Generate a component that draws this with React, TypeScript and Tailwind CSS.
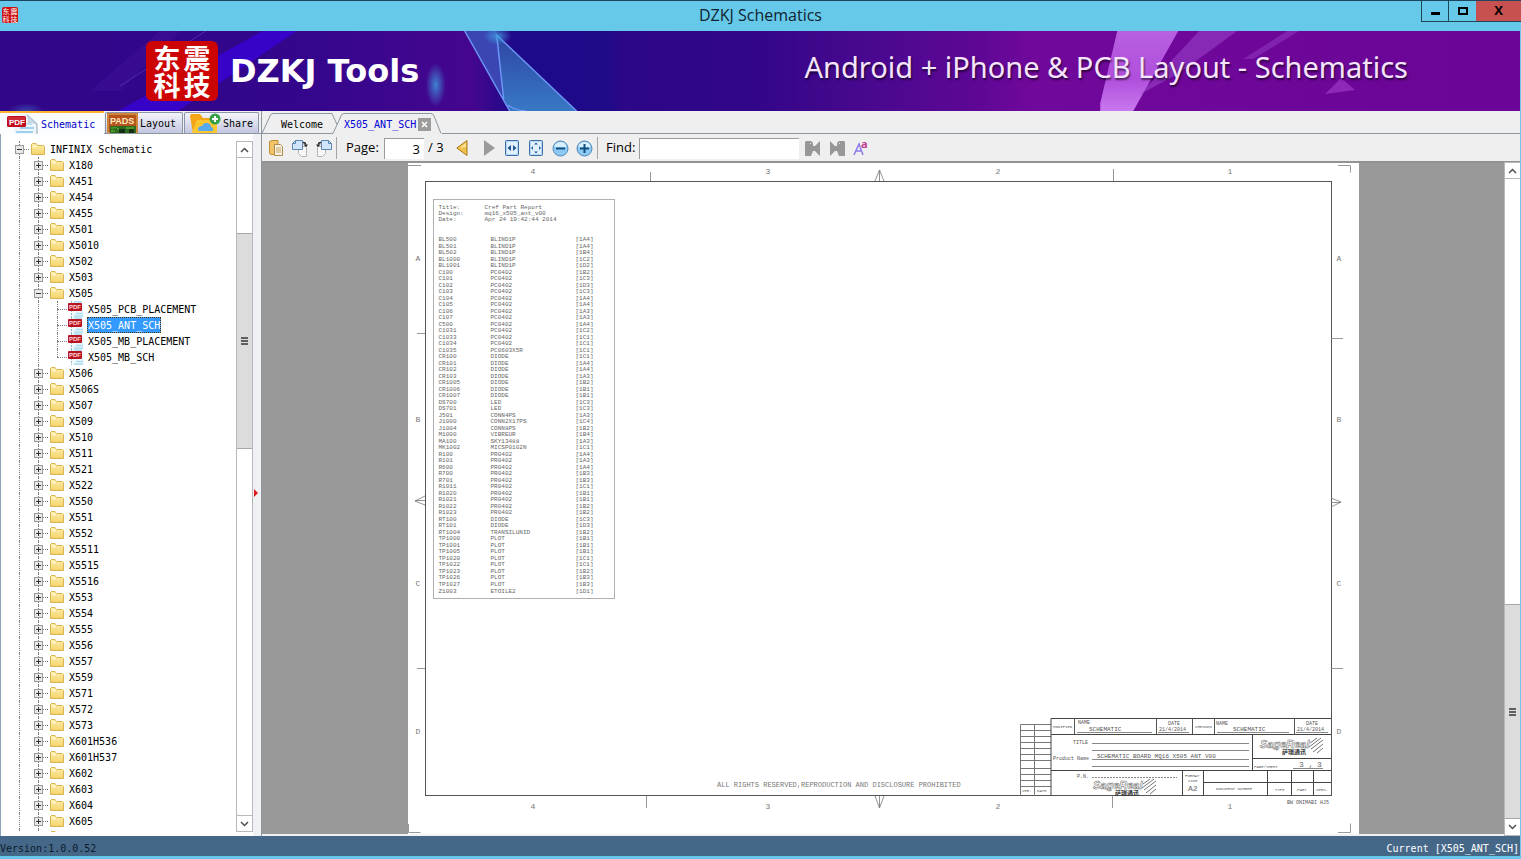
import { useState } from "react"
import type { ReactNode } from "react"

type TreeItem = { name: string; files?: string[] }

const folders: TreeItem[] = [
    { name: "X180" },
    { name: "X451" },
    { name: "X454" },
    { name: "X455" },
    { name: "X501" },
    { name: "X5010" },
    { name: "X502" },
    { name: "X503" },
    { name: "X505", files: ["X505_PCB_PLACEMENT", "X505_ANT_SCH", "X505_MB_PLACEMENT", "X505_MB_SCH"] },
    { name: "X506" },
    { name: "X506S" },
    { name: "X507" },
    { name: "X509" },
    { name: "X510" },
    { name: "X511" },
    { name: "X521" },
    { name: "X522" },
    { name: "X550" },
    { name: "X551" },
    { name: "X552" },
    { name: "X5511" },
    { name: "X5515" },
    { name: "X5516" },
    { name: "X553" },
    { name: "X554" },
    { name: "X555" },
    { name: "X556" },
    { name: "X557" },
    { name: "X559" },
    { name: "X571" },
    { name: "X572" },
    { name: "X573" },
    { name: "X601H536" },
    { name: "X601H537" },
    { name: "X602" },
    { name: "X603" },
    { name: "X604" },
    { name: "X605" },
]

const header = [
    ["Title:", "Cref Part Report"],
    ["Design:", "mq16_x505_ant_v00"],
    ["Date:", "Apr 24 19:42:44 2014"],
]

const parts = [
    ["BL500", "BLIND1P", "[1A4]"],
    ["BL501", "BLIND1P", "[1A4]"],
    ["BL502", "BLIND1P", "[1B4]"],
    ["BL1000", "BLIND1P", "[1C2]"],
    ["BL1001", "BLIND1P", "[1D2]"],
    ["C100", "PC0402", "[1B2]"],
    ["C101", "PC0402", "[1C3]"],
    ["C102", "PC0402", "[1D3]"],
    ["C103", "PC0402", "[1C3]"],
    ["C104", "PC0402", "[1A4]"],
    ["C105", "PC0402", "[1A4]"],
    ["C106", "PC0402", "[1A3]"],
    ["C107", "PC0402", "[1A3]"],
    ["C500", "PC0402", "[1A4]"],
    ["C1031", "PC0402", "[1C2]"],
    ["C1033", "PC0402", "[1C1]"],
    ["C1034", "PC0402", "[1C1]"],
    ["C1035", "PC0603X5R", "[1C1]"],
    ["CR100", "DIODE", "[1C1]"],
    ["CR101", "DIODE", "[1A4]"],
    ["CR102", "DIODE", "[1A4]"],
    ["CR103", "DIODE", "[1A3]"],
    ["CR1005", "DIODE", "[1B2]"],
    ["CR1006", "DIODE", "[1B1]"],
    ["CR1007", "DIODE", "[1B1]"],
    ["DS700", "LED", "[1C3]"],
    ["DS701", "LED", "[1C3]"],
    ["J501", "CONN4PS", "[1A3]"],
    ["J1000", "CONN2X17PS", "[1C4]"],
    ["J1004", "CONN8PS", "[1B2]"],
    ["M1000", "VIBREUR", "[1B4]"],
    ["MA100", "SKY13488", "[1A3]"],
    ["MK1002", "MICSP0102N", "[1C1]"],
    ["R100", "PR0402", "[1A4]"],
    ["R101", "PR0402", "[1A3]"],
    ["R600", "PR0402", "[1A4]"],
    ["R700", "PR0402", "[1B3]"],
    ["R701", "PR0402", "[1B3]"],
    ["R1011", "PR0402", "[1C1]"],
    ["R1020", "PR0402", "[1B1]"],
    ["R1021", "PR0402", "[1B1]"],
    ["R1022", "PR0402", "[1B2]"],
    ["R1023", "PR0402", "[1B2]"],
    ["RT100", "DIODE", "[1C3]"],
    ["RT101", "DIODE", "[1D3]"],
    ["RT1004", "TRANSILUNID", "[1B2]"],
    ["TP1000", "PLOT", "[1B1]"],
    ["TP1001", "PLOT", "[1B1]"],
    ["TP1005", "PLOT", "[1B1]"],
    ["TP1020", "PLOT", "[1C1]"],
    ["TP1022", "PLOT", "[1C1]"],
    ["TP1023", "PLOT", "[1B2]"],
    ["TP1026", "PLOT", "[1B3]"],
    ["TP1027", "PLOT", "[1B3]"],
    ["Z1003", "ETOILE2", "[1D1]"],
]

/* ---------- icons ---------- */

function FolderIcon() {
    return (
        <svg className="w-[14px] h-[13px] shrink-0" viewBox="0 0 14 13">
            <defs>
                <linearGradient id="folder" x1="0" y1="0" x2="0" y2="1">
                    <stop offset="0" stopColor="#fff0ac" />
                    <stop offset="1" stopColor="#f3d36b" />
                </linearGradient>
            </defs>
            <path d="M.5 11.500V1.500L1.500.5H5l1.500 2h6l1 1v8z" fill="url(#folder)" stroke="#dab251" />
            <path d="M1.500 3.500H6" stroke="#fffbe0" />
        </svg>
    )
}

function PdfIcon() {
    return (
        <svg className="w-4 h-4 shrink-0" viewBox="0 0 16 16">
            <path d="M3 0h8l5 4v12H3z" fill="#eef8fd" />
            <path d="M3.500 0v16" stroke="#9fb4c4" strokeDasharray="2 1" />
            <path d="M6 1h8M8 12.500h7M6 15h9" stroke="#a9dbf0" strokeWidth="1.500" />
            <rect x="0" y="2" width="14" height="8" rx="1" fill="#b91220" />
            <text x="1" y="8" className="font-['Liberation_Sans'] text-[6px] font-bold" fill="#ffdede">PDF</text>
        </svg>
    )
}

function PdfLargeIcon() {
    return (
        <svg className="w-8 h-5 shrink-0" viewBox="0 0 32 20">
            <path d="M7 0h15l8 8v12H7z" fill="#eef6fb" />
            <path d="M20 1l10 9v10" fill="none" stroke="#8da3b1" />
            <path d="M20 1c2 3 2 6 1 8 3-1 6 0 9 1z" fill="#c9dce8" stroke="#9fb4c2" strokeWidth=".5" />
            <path d="M13 14h14M9 18h17" stroke="#9fd0ee" strokeWidth="2" />
            <path d="M19 10h6" stroke="#b9dcf0" strokeWidth="1.500" />
            <rect x="0" y="2" width="19" height="11" rx="1.500" fill="#c10d1d" />
            <path d="M1 3h17v4H1z" fill="#d8404a" opacity=".6" />
            <text x="2" y="11" className="font-['Liberation_Sans'] text-[8px] font-bold" fill="#fff">PDF</text>
        </svg>
    )
}

function PadsIcon() {
    return (
        <svg className="w-[31px] h-5 shrink-0" viewBox="0 0 31 20">
            <rect width="31" height="20" fill="#b4541c" />
            <rect x="1" y="1" width="29" height="19" fill="none" stroke="#e8b35a" />
            <rect x="3" y="13" width="26" height="7" fill="#2c6a1f" />
            <path d="M4 15h6l2 2h5M19 15h8M4 18h4" stroke="#66c53a" />
            <rect x="12" y="16" width="6" height="4" fill="#163012" />
            <rect x="22" y="16" width="5" height="4" fill="#163012" />
            <text x="3" y="11" className="font-['Liberation_Sans'] text-[9px] font-bold" fill="#ffe9c0">PADS</text>
        </svg>
    )
}

function ShareIcon() {
    return (
        <svg className="w-8 h-5 shrink-0" viewBox="0 0 32 20">
            <path d="M1 3q0-2 2-2h8l3 4h13v15H4z" fill="#f2a618" />
            <path d="M3 20L8 7h20v13z" fill="#ffc62e" />
            <path d="M9 17q0-4 4-4 2-4 6-3 3 1 3 4 3 1 2 4H10q-1 0-1-1z" fill="#56a9ec" />
            <circle cx="26" cy="6" r="5.500" fill="#35a046" />
            <path d="M26 3v6M23 6h6" stroke="#fff" strokeWidth="2" />
        </svg>
    )
}

function CopyIcon() {
    return (
        <svg className="w-[14px] h-4" viewBox="0 0 14 16">
            <path d="M.5 1.500L3 .5h6v14H2l-1.500-1z" fill="#f0c467" stroke="#c08f35" />
            <path d="M5.500 4.500h6l2 2v9h-8z" fill="#f6f1e2" stroke="#b08a48" />
            <path d="M7 8h5M7 10h5M7 12h5" stroke="#c9a765" />
        </svg>
    )
}

function RotateIcon({ flip }: { flip?: boolean }) {
    return (
        <svg className={flip ? "w-4 h-[17px] -scale-x-100" : "w-4 h-[17px]"} viewBox="0 0 16 17">
            <path d="M6.500 6.500h8v10h-5l-3-3z" fill="#f7f7f7" stroke="#b5b5b5" />
            <path d="M.5 3.500l3-3h7v9H.5z" fill="#cfe4f8" stroke="#5d86b5" />
            <path d="M.5 3.500h3v-3" fill="none" stroke="#5d86b5" />
            <path d="M11 2.500q2.500 0 2.500 2" fill="none" stroke="#222" strokeWidth="1.500" />
            <path d="M11.500 4.500h4.500l-2 2.500z" fill="#222" />
        </svg>
    )
}

function FitIcon({ wide }: { wide?: boolean }) {
    return (
        <svg className="w-[14px] h-4" viewBox="0 0 14 16">
            <rect x=".5" y=".5" width="13" height="15" rx="1" fill="#b5d7f6" stroke="#3c6ea8" />
            <rect x="2" y="2" width="10" height="12" fill="#e2f0fc" />
            {wide ? (
                <path d="M6 5v6L2.500 8zM8 5v6l3.500-3z" fill="#1f5593" />
            ) : (
                <path d="M7 2.500l2 2H5zM7 13.500l2-2H5zM2 8l2-2v4zM12 8l-2-2v4z" fill="#2d63a0" />
            )}
        </svg>
    )
}

function ZoomIcon({ plus }: { plus?: boolean }) {
    return (
        <svg className="w-[17px] h-[17px]" viewBox="0 0 17 17">
            <circle cx="8.500" cy="8.500" r="7.500" fill="#8cc9f5" stroke="#4f87b5" />
            <path d="M2.500 7a6 5 0 0 1 12 0z" fill="#d8effe" />
            <path d={plus ? "M4 8.500h9M8.500 4v9" : "M4 8.500h9"} stroke="#14507f" strokeWidth="2" />
        </svg>
    )
}

function FindIcon({ next }: { next?: boolean }) {
    return (
        <svg className={next ? "w-[15px] h-4 -scale-x-100" : "w-[15px] h-4"} viewBox="0 0 15 16">
            <path d="M0 2l1-1h5l2 2v3l2 0 5-5v15l-5-5H8l-2 5H0z" fill="#979797" />
            <rect x="5" y="3" width="1" height="1" fill="#e5e5e5" />
        </svg>
    )
}

function Chevron({ up }: { up?: boolean }) {
    return (
        <svg className="w-[9px] h-[6px]" viewBox="0 0 9 6">
            <path d={up ? "M1 5l3.500-3.500L8 5" : "M1 1l3.500 3.500L8 1"} fill="none" stroke="#505050" strokeWidth="1.500" />
        </svg>
    )
}

function Grip() {
    return (
        <span className="flex flex-col gap-px">
            <span className="w-[7px] h-[2px] bg-[#606060]" />
            <span className="w-[7px] h-[2px] bg-[#606060]" />
            <span className="w-[7px] h-[2px] bg-[#606060]" />
        </span>
    )
}

/* ---------- title bar + banner ---------- */

function TitleBar() {
    return (
        <header className="relative h-[31px] shrink-0 bg-[#66c9ea] border-t border-[#1d4560] flex items-start justify-center">
            <span className="absolute left-[2px] top-[6px] w-4 h-4 rounded-xs bg-[#cc1010] text-white grid grid-cols-2 text-[7px] leading-[8px] text-center font-['Noto_Sans_CJK_SC',sans-serif]">
                <span>东</span><span>震</span><span>科</span><span>技</span>
            </span>
            <h1 className="font-['Open_Sans',sans-serif] text-[16px] leading-[29px] text-[#0f2430]">DZKJ Schematics</h1>
            <div className="absolute right-0 top-0 flex h-[21px] border-l border-b border-[#1f4656]">
                <button aria-label="Minimize" className="w-[27px] border-r border-[#1f4656] flex items-center justify-center">
                    <span className="w-[9px] h-[3px] mt-1 bg-black" />
                </button>
                <button aria-label="Maximize" className="w-[27px] flex items-center justify-center">
                    <span className="w-[10px] h-2 border-2 border-black" />
                </button>
                <button aria-label="Close" className="w-[45px] bg-[#c75050] flex items-center justify-center font-['Open_Sans',sans-serif] text-[13px] font-bold text-black">
                    X
                </button>
            </div>
        </header>
    )
}

function Banner() {
    return (
        <div className="relative h-20 shrink-0 overflow-hidden bg-[#310688] text-white">
            <svg className="absolute inset-0 w-full h-full" viewBox="0 0 1521 80" preserveAspectRatio="none">
                <defs>
                    <linearGradient id="sky">
                        <stop offset="0" stopColor="#310688" />
                        <stop offset=".2" stopColor="#33068c" />
                        <stop offset=".31" stopColor="#45068f" />
                        <stop offset=".34" stopColor="#1c0a88" />
                        <stop offset=".4" stopColor="#1f0a88" />
                        <stop offset=".41" stopColor="#2c0788" />
                        <stop offset=".5" stopColor="#330689" />
                        <stop offset=".57" stopColor="#48088f" />
                        <stop offset=".64" stopColor="#5d0796" />
                        <stop offset=".68" stopColor="#70089b" />
                        <stop offset="1" stopColor="#6a0598" />
                    </linearGradient>
                    <linearGradient id="shard" x1="0" y1="0" x2="0" y2="1">
                        <stop offset="0" stopColor="#2f4fa8" />
                        <stop offset="1" stopColor="#3d8cd0" />
                    </linearGradient>
                    <linearGradient id="pink" x1="0" y1="0" x2="0" y2="1">
                        <stop offset="0" stopColor="#b860e0" />
                        <stop offset=".6" stopColor="#b04fdd" />
                        <stop offset="1" stopColor="#c878ee" />
                    </linearGradient>
                    <radialGradient id="glow">
                        <stop offset="0" stopColor="#3fa0e0" stopOpacity=".8" />
                        <stop offset="1" stopColor="#3fa0e0" stopOpacity="0" />
                    </radialGradient>
                </defs>
                <rect width="1521" height="80" fill="url(#sky)" />
                <path d="M263 0h34L218 53l-40 27h-60z" fill="#3a02d8" opacity=".8" />
                <path d="M160 0h20L120 60H90z" fill="#4a1aa8" opacity=".25" />
                <path d="M206 0L120 55" stroke="#6a4ac8" opacity=".5" />
                <path d="M465 0h32l8 70z" fill="#3b46b4" />
                <path d="M497 4l80 76h-67l-6-12z" fill="url(#shard)" opacity=".85" />
                <path d="M465 0l45 80M497 4l7 64M497 4l80 76M508 74q7 5 18 6" fill="none" stroke="#6b94f4" strokeWidth="1.500" />
                <ellipse cx="498" cy="5" rx="14" ry="9" fill="url(#glow)" />
                <ellipse cx="436" cy="54" rx="10" ry="22" fill="url(#glow)" />
                <ellipse cx="26" cy="80" rx="18" ry="8" fill="url(#glow)" opacity=".5" />
                <path d="M1118 0h61l-45 80h-33v-8z" fill="url(#pink)" />
                <path d="M1200 0h38l-58 42-40 22z" fill="#a04bd0" opacity=".5" />
                <path d="M1288 0h12l-46 28h-10z" fill="#a04bd0" opacity=".4" />
                <path d="M1342 47l14 12-30 4z" fill="#9c38c4" opacity=".7" />
            </svg>
            <div className="relative flex h-full items-center pl-[146px] pr-28">
                <div className="grid grid-cols-2 w-[72px] h-[60px] px-[6px] py-[3px] rounded-md bg-[#cc0404] font-['Noto_Sans_CJK_SC',sans-serif] text-[27px] leading-[27px] font-bold text-center">
                    <span>东</span><span>震</span><span>科</span><span>技</span>
                </div>
                <span className="ml-3 font-['DejaVu_Sans',sans-serif] text-[32px] font-bold">DZKJ Tools</span>
                <span className="ml-auto mb-2 font-['Noto_Sans',sans-serif] text-[29px] text-[#f6e4fc] [text-shadow:1px_2px_2px_rgba(0,0,0,0.6)]">
                    Android + iPhone &amp; PCB Layout - Schematics
                </span>
            </div>
        </div>
    )
}

/* ---------- sidebar ---------- */

function Line({ last, branch }: { last?: boolean; branch?: boolean }) {
    return (
        <span className="relative w-[19px] h-4 shrink-0">
            <span className={last ? "absolute left-[9px] top-0 h-2 border-l border-dotted border-[#808080]" : "absolute left-[9px] top-0 h-4 border-l border-dotted border-[#808080]"} />
            {branch && <span className="absolute left-[9px] right-0 top-2 border-t border-dotted border-[#808080]" />}
        </span>
    )
}

function Toggle({ open, name, onClick }: { open: boolean; name: string; onClick: () => void }) {
    return (
        <span className="relative w-[19px] h-4 shrink-0">
            <span className="absolute left-[9px] top-0 h-4 border-l border-dotted border-[#808080]" />
            <span className="absolute left-[9px] right-0 top-2 border-t border-dotted border-[#808080]" />
            <button
                aria-label={(open ? "Collapse " : "Expand ") + name}
                onClick={onClick}
                className="absolute left-[5px] top-1 w-[9px] h-[9px] border border-[#9a9a9a] bg-[#e9e9e9]"
            >
                <svg className="block w-[7px] h-[7px]" viewBox="0 0 7 7">
                    <path d={open ? "M1 3.500h5" : "M1 3.500h5M3.500 1v5"} stroke="#333" />
                </svg>
            </button>
        </span>
    )
}

function Tree({ selected, onSelect }: { selected: string; onSelect: (name: string) => void }) {
    const [open, setOpen] = useState<string[]>(["INFINIX Schematic", "X505"])

    const toggle = (name: string) => {
        setOpen(open.includes(name) ? open.filter((n) => n !== name) : [...open, name])
    }

    const rootOpen = open.includes("INFINIX Schematic")

    return (
        <ul className="flex-1 min-w-0 pl-[10px] overflow-hidden leading-4">
            <li className="flex items-center h-4">
                <Toggle open={rootOpen} name="INFINIX Schematic" onClick={() => toggle("INFINIX Schematic")} />
                <span className="flex items-center gap-1 pl-[2px]">
                    <FolderIcon />
                    <span className="px-px pt-px">INFINIX Schematic</span>
                </span>
            </li>
            {rootOpen && folders.map((folder) => (
                <li key={folder.name}>
                    <div className="flex items-center h-4">
                        <Line />
                        <Toggle open={open.includes(folder.name)} name={folder.name} onClick={() => toggle(folder.name)} />
                        <span className="flex items-center gap-1 pl-[2px]">
                            <FolderIcon />
                            <span className="px-px pt-px">{folder.name}</span>
                        </span>
                    </div>
                    {folder.files && open.includes(folder.name) && (
                        <ul>
                            {folder.files.map((file, i) => (
                                <li key={file} className="flex items-center h-4">
                                    <Line />
                                    <Line />
                                    <Line branch last={i === folder.files!.length - 1} />
                                    <span className="flex items-center gap-[3px] pl-px">
                                        <PdfIcon />
                                        <button
                                            onClick={() => onSelect(file)}
                                            className={file === selected
                                                ? "h-4 px-px pt-px leading-[15px] bg-[#3399ff] text-white outline-1 -outline-offset-1 outline-dotted outline-[#4a3a10]"
                                                : "h-4 px-px pt-px leading-[15px]"}
                                        >
                                            {file}
                                        </button>
                                    </span>
                                </li>
                            ))}
                        </ul>
                    )}
                </li>
            ))}
            {/* next folder peeks in at the bottom */}
            {rootOpen && (
                <li className="flex items-center h-4" aria-hidden>
                    <Line />
                    <Line />
                    <span className="pl-[2px]"><FolderIcon /></span>
                </li>
            )}
        </ul>
    )
}

function SideTab({ icon, label, active, className }: { icon: ReactNode; label: string; active?: boolean; className: string }) {
    return (
        <button
            role="tab"
            aria-selected={!!active}
            className={"flex items-center gap-[2px] overflow-hidden " + className + (active
                ? " h-[23px] bg-[#fcfdfe] border-t-2 border-[#ffb22e] text-[#0000c8]"
                : " h-[21px] bg-linear-to-b from-[#f4f5fa] to-[#c3c6e0] border border-b-0 border-[#8b95a8] rounded-t-xs text-black")}
        >
            {icon}
            <span className="pt-px">{label}</span>
        </button>
    )
}

function Sidebar({ selected, onSelect }: { selected: string; onSelect: (name: string) => void }) {
    return (
        <aside className="w-[262px] shrink-0 flex flex-col border-r border-[#8d979f] bg-[#f0f0f0]">
            <div role="tablist" className="flex items-end h-[23px] shrink-0 border-b border-[#8d979f]">
                <SideTab active icon={<PdfLargeIcon />} label="Schematic" className="-mb-px w-[104px] pl-[7px]" />
                <SideTab icon={<PadsIcon />} label="Layout" className="ml-px w-[78px] pl-px" />
                <SideTab icon={<ShareIcon />} label="Share" className="ml-px w-[75px] pl-1" />
            </div>
            <div className="flex flex-1 min-h-0 bg-white border-l border-[#8fa3b8]">
                <div className="flex flex-1 min-w-0 -ml-px pt-[7px] pb-1">
                    <Tree selected={selected} onSelect={onSelect} />
                    <div className="w-[17px] flex flex-col border border-[#b8b8b8] bg-white">
                        <button aria-label="Scroll up" className="h-4 shrink-0 flex items-center justify-center border-b border-[#b8b8b8]"><Chevron up /></button>
                        <div className="basis-0 grow-[75]" />
                        <div className="basis-0 grow-[214] border-y border-[#a8a8a8] bg-[#dcdcdc] flex items-center justify-center"><Grip /></div>
                        <div className="basis-0 grow-[367]" />
                        <button aria-label="Scroll down" className="h-4 shrink-0 flex items-center justify-center border-t border-[#b8b8b8]"><Chevron /></button>
                    </div>
                </div>
                <button aria-label="Collapse panel" className="w-2 bg-[#eff1f5] flex items-center">
                    <svg className="w-[6px] h-2 mt-4" viewBox="0 0 6 8">
                        <path d="M1 0l4 4-4 4z" fill="#e01818" />
                    </svg>
                </button>
            </div>
        </aside>
    )
}

/* ---------- viewer ---------- */

function DocTabs() {
    return (
        <div role="tablist" className="relative flex h-[23px] shrink-0 bg-[#efefef]">
            <svg className="absolute left-0 top-0 w-[180px] h-[23px]" viewBox="0 0 180 23">
                <path d="M0 22.500L8 5q1-2.500 3-2.500h59l5 11" fill="none" stroke="#8d979f" />
                <path d="M0 22.500h71L79 5q1-2.500 3-2.500h87q2 0 3 2.500l7 17.500" fill="none" stroke="#8d979f" />
            </svg>
            <button role="tab" aria-selected={false} className="relative w-[71px] pl-[19px] pt-1 text-left">Welcome</button>
            <div className="relative w-[109px] flex items-center pl-[11px] pt-1">
                <button role="tab" aria-selected className="text-[#0000d8]">X505_ANT_SCH</button>
                <button aria-label="Close tab" className="ml-[2px] w-[13px] h-[13px] bg-[#9c9c9c] flex items-center justify-center">
                    <svg className="w-[7px] h-[7px]" viewBox="0 0 7 7">
                        <path d="M1 1l5 5M6 1L1 6" stroke="#fff" strokeWidth="1.500" />
                    </svg>
                </button>
            </div>
            <div className="flex-1 border-b border-[#8d979f]" />
        </div>
    )
}

function Toolbar() {
    return (
        <div className="flex items-center h-7 shrink-0 pl-[7px] pt-px bg-[#efefef] border-b border-[#929292] font-['Open_Sans',sans-serif] text-[13px] text-black">
            <button aria-label="Copy"><CopyIcon /></button>
            <button aria-label="Rotate right" className="ml-[9px]"><RotateIcon /></button>
            <button aria-label="Rotate left" className="ml-2"><RotateIcon flip /></button>
            <span className="ml-1 h-[22px] border-l border-[#a5a5a5]" />
            <label htmlFor="page" className="ml-[9px] w-[38px]">Page:</label>
            <input id="page" defaultValue="3" className="w-10 h-[21px] px-1 bg-white border-t border-l border-[#9b9b9b] text-right outline-none" />
            <span className="ml-1 w-7">/ 3</span>
            <button aria-label="Previous page">
                <svg className="w-3 h-4" viewBox="0 0 12 16">
                    <path d="M11 .5v15L.8 8z" fill="#efc04a" stroke="#a87a1c" />
                    <path d="M10 3v4L4 8z" fill="#fbe39a" />
                </svg>
            </button>
            <button aria-label="Next page" className="ml-4">
                <svg className="w-3 h-4" viewBox="0 0 12 16">
                    <path d="M0 0v16L11 8z" fill="#9a9a9a" />
                </svg>
            </button>
            <button aria-label="Fit width" className="ml-[9px]"><FitIcon wide /></button>
            <button aria-label="Fit page" className="ml-[10px]"><FitIcon /></button>
            <button aria-label="Zoom out" className="ml-[9px]"><ZoomIcon /></button>
            <button aria-label="Zoom in" className="ml-[7px]"><ZoomIcon plus /></button>
            <span className="ml-1 h-[22px] border-l border-[#a5a5a5]" />
            <label htmlFor="find" className="ml-2 w-[33px]">Find:</label>
            <input id="find" className="w-40 h-[21px] px-1 bg-white border-t border-l border-[#9b9b9b] outline-none" />
            <button aria-label="Find previous" className="ml-[6px]"><FindIcon /></button>
            <button aria-label="Find next" className="ml-[10px]"><FindIcon next /></button>
            <button aria-label="Match case" className="ml-2">
                <svg className="w-[15px] h-[18px] overflow-visible" viewBox="0 0 15 18">
                    <path d="M1 16L6 5l4 11M3 12h6" fill="none" stroke="#8c7af0" strokeWidth="1.500" />
                    <text x="8" y="9" className="font-['Open_Sans'] text-[11px] font-bold" fill="#c03a90">a</text>
                </svg>
            </button>
        </div>
    )
}

function Maker() {
    return (
        <g>
            <text x="0" y="11" className="font-['Liberation_Sans'] text-[11px] italic font-bold" fill="#fff" stroke="#666" strokeWidth=".5">SageReal</text>
            <text x="22" y="17" className="font-['Noto_Sans_CJK_SC'] text-[6px] font-bold" fill="#333">萨瑞通讯</text>
            <path d="M50 6l7-5M49 10l12-9M51 12l12-9M53 15l10-8M57 16l6-5" stroke="#666" strokeWidth=".9" />
        </g>
    )
}

function SheetDrawing() {
    const cols = [["4", 533], ["3", 768], ["2", 998], ["1", 1230]] as const
    const rows = [["A", 261], ["B", 422], ["C", 586], ["D", 734]] as const
    const revRows = [730.5, 736.5, 742.5, 748.5, 754.5, 760.5, 768.5, 774.5, 780.5, 786.5]

    return (
        <svg className="absolute inset-0 w-full h-full font-['Liberation_Mono']" viewBox="408 163 951 671" fill="none">
            {/* crop marks */}
            <path d="M408 165.500h13M1338 165.500h12.500v7M1338 832.500h12.500v-9M408.500 824v8.500h12" stroke="#999" />
            {/* frame */}
            <rect x="425.500" y="181.500" width="906" height="614" stroke="#555" />
            <path d="M650.500 172v9M1113.500 169v12M646.500 796v12M1112.500 796v12M417 333.500h8M417 668.500h8M1331 338.500h12M1331 668.500h12" stroke="#999" />
            <path d="M875 181l4.500-11 4.500 11M879.500 170v11M875 796l4.500 12 4.500-12M879.500 796v12M425 496l-10 5 10 4M415 500.500h10M1331 498l10 4-10 5M1331 502.500h10" stroke="#777" strokeWidth=".8" />
            <g className="text-[8px]" fill="#777" textAnchor="middle">
                {cols.map(([label, x]) => (
                    <g key={label}>
                        <text x={x} y="174">{label}</text>
                        <text x={x} y="809">{label}</text>
                    </g>
                ))}
                {rows.map(([label, y]) => (
                    <g key={label}>
                        <text x="418" y={y}>{label}</text>
                        <text x="1339" y={y}>{label}</text>
                    </g>
                ))}
            </g>
            <text x="717" y="787" className="text-[7px]" fill="#777">ALL RIGHTS RESERVED,REPRODUCTION AND DISCLOSURE PROHIBITED</text>

            {/* revision block */}
            <path d="M1051 724.500h-30.500V796M1034.500 724v72" stroke="#777" />
            {revRows.map((y) => <path key={y} d={`M1020 ${y}h31`} stroke="#777" />)}

            {/* title block */}
            <path d="M1051 796v-77.500h280M1051 734.500h280M1051 770.500h280M1252.500 734v36M1252 758.500h79M1182.500 770v26M1203.500 770v26M1203 782.500h128M1267.500 770v26M1291.500 770v26M1313.500 770v26" stroke="#444" />
            <path d="M1074.500 718v16M1156.500 718v16M1192.500 718v16M1214.500 718v16M1294.500 718v16" stroke="#555" />
            <path d="M1077 732.500h75M1158 732.500h31M1217 732.500h72M1296 732.500h32M1092 743.500h157M1092 750.500h157M1092 759.500h157M1092 766.500h157M1293 768.500h30" stroke="#888" />
            <path d="M1092 777.500h85" stroke="#888" strokeDasharray="2 1" />
            <g className="text-[5px]" fill="#555">
                <text x="1053" y="728" className="text-[4px]">MODIFIED</text>
                <text x="1078" y="724">NAME</text>
                <text x="1168" y="725">DATE</text>
                <text x="1159" y="731">21/4/2014</text>
                <text x="1195" y="728" className="text-[4px]">CHECKED</text>
                <text x="1216" y="725">NAME</text>
                <text x="1306" y="725">DATE</text>
                <text x="1297" y="731">21/4/2014</text>
                <text x="1073" y="744">TITLE</text>
                <text x="1053" y="760">Product Name</text>
                <text x="1254" y="768" className="text-[4px]">PAGE/SHEET</text>
                <text x="1077" y="778">P.N.</text>
                <text x="1185" y="777" className="text-[4px]">FORMAT</text>
                <text x="1188" y="782" className="text-[4px]">SIZE</text>
                <text x="1216" y="790" className="text-[4px]">DOCUMENT NUMBER</text>
                <text x="1275" y="791" className="text-[4px]">TYPE</text>
                <text x="1297" y="791" className="text-[4px]">PART</text>
                <text x="1316" y="791" className="text-[4px]">VERS.</text>
                <text x="1022" y="792" className="text-[4px]">VER.</text>
                <text x="1037" y="792" className="text-[4px]">DATE</text>
                <text x="1287" y="804">BW ONIMABI HJ5</text>
            </g>
            <g className="text-[6px]" fill="#555">
                <text x="1089" y="731">SCHEMATIC</text>
                <text x="1233" y="731">SCHEMATIC</text>
                <text x="1097" y="758">SCHEMATIC BOARD MQ16 X505 ANT V00</text>
            </g>
            <g className="text-[8px]" fill="#666">
                <text x="1188" y="791">A2</text>
                <text x="1299" y="767">3 ,</text>
                <text x="1317" y="767">3</text>
            </g>
            <g transform="translate(1260 737)"><Maker /></g>
            <g transform="translate(1093 778)"><Maker /></g>
        </svg>
    )
}

function PartReport() {
    return (
        <div className="absolute left-[25px] top-9 w-[182px] h-[400px] border border-[#b0b0b0] pl-[5px] pt-[5px] font-['Liberation_Mono',monospace] text-[6px] leading-[6px] text-[#666]">
            <dl className="h-5">
                {header.map(([key, value]) => (
                    <div key={key} className="flex">
                        <dt className="w-[46px]">{key}</dt>
                        <dd>{value}</dd>
                    </div>
                ))}
            </dl>
            <table className="mt-3 h-[358px] border-collapse text-left">
                <tbody>
                    {parts.map(([ref, part, zone]) => (
                        <tr key={ref}>
                            <td className="w-[52px] p-0">{ref}</td>
                            <td className="w-[85px] p-0">{part}</td>
                            <td className="p-0">{zone}</td>
                        </tr>
                    ))}
                </tbody>
            </table>
        </div>
    )
}

function Viewer() {
    return (
        <main className="flex-1 min-w-0 flex flex-col">
            <DocTabs />
            <Toolbar />
            <div className="flex flex-1 min-h-0 bg-[#999]">
                <div className="flex-1 min-w-0 flex justify-center overflow-hidden border-t border-[#929292] border-b-2 border-b-[#f0f2f4]">
                    <div className="relative w-[951px] h-[671px] shrink-0 bg-white">
                        <SheetDrawing />
                        <PartReport />
                    </div>
                </div>
                <div className="w-4 flex flex-col border border-r-0 border-[#b8b8b8] bg-white">
                    <button aria-label="Page up" className="h-4 shrink-0 flex items-center justify-center border-b border-[#b8b8b8]"><Chevron up /></button>
                    <div className="basis-0 grow-[427]" />
                    <div className="basis-0 grow-[214] border-y border-[#a8a8a8] bg-[#dcdcdc] flex items-center justify-center"><Grip /></div>
                    <button aria-label="Page down" className="h-4 shrink-0 flex items-center justify-center"><Chevron /></button>
                </div>
            </div>
        </main>
    )
}

export default function App() {
    const [selected, setSelected] = useState("X505_ANT_SCH")

    return (
        <div className="h-screen flex flex-col overflow-hidden bg-[#66c9ea] pb-[3px] font-['DejaVu_Sans_Mono',monospace] text-[10px] text-black">
            <TitleBar />
            <div className="flex flex-col flex-1 min-h-0 mr-px">
                <Banner />
                <div className="flex flex-1 min-h-0">
                    <Sidebar selected={selected} onSelect={setSelected} />
                    <Viewer />
                </div>
                <footer className="flex items-end justify-between h-5 shrink-0 pr-px bg-[#456889] leading-[14px]">
                    <span className="text-[#0c1a2a]">Version:1.0.0.52</span>
                    <span className="text-white">Current [{selected}]</span>
                </footer>
            </div>
        </div>
    )
}
